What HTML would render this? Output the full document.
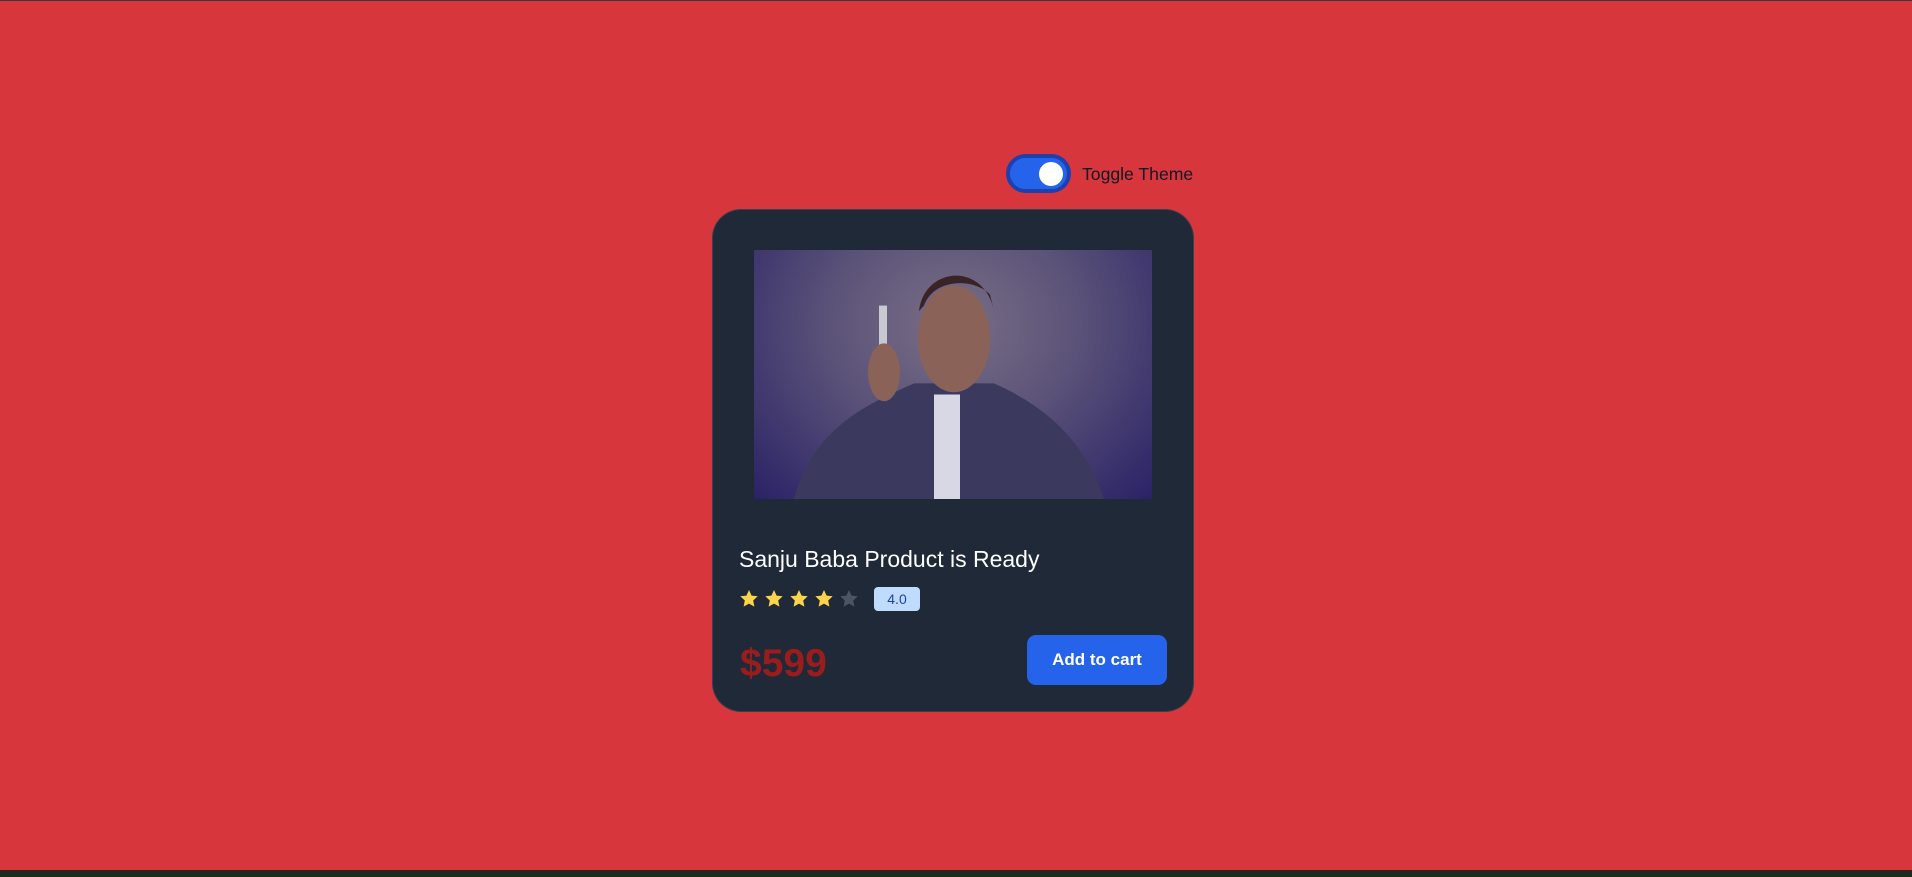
<!DOCTYPE html>
<html><head><style>
html,body{margin:0;padding:0;width:1912px;height:877px;overflow:hidden;background:#d7373c;font-family:"Liberation Sans",sans-serif;position:relative}
.top{position:absolute;left:0;top:0;width:1912px;height:1px;background:#3a3a3a}
.bot{position:absolute;left:0;top:870px;width:1912px;height:7px;background:#1e2a1e}
.tog{position:absolute;left:1006px;top:154px;width:65px;height:39px;border-radius:20px;background:#1e40af}
.tog i{position:absolute;left:4px;top:4px;right:4px;bottom:4px;border-radius:16px;background:#2563eb}
.tog b{position:absolute;left:33px;top:8px;width:24px;height:24px;border-radius:50%;background:#fff}
.tt{position:absolute;left:1082px;top:164px;font-size:17.6px;color:#111827}
.card{position:absolute;left:713px;top:210px;width:480px;height:501px;background:#1f2937;border-radius:28px;box-shadow:0 0 0 1px #3b3f4a}
.img{position:absolute;left:41px;top:40px;width:398px;height:249px;background:radial-gradient(ellipse at 50% 30%,#7a6f86 0%,#5a5278 45%,#2a2266 100%)}
.title{position:absolute;left:26px;top:336px;font-size:23px;color:#fff}
.stars{position:absolute;left:26px;top:379px}
.badge{position:absolute;left:161px;top:377px;width:46px;height:24px;border-radius:4px;background:#bfdbfe;color:#1e40af;font-size:14px;text-align:center;line-height:24px}
.price{position:absolute;left:27px;top:432px;font-size:39px;font-weight:bold;color:#9b1c1c}
.btn{position:absolute;left:314px;top:425px;width:140px;height:50px;border-radius:9px;background:#2563eb;color:#fff;font-size:17px;font-weight:bold;text-align:center;line-height:50px}
</style></head><body>
<div class="top"></div>
<div class="tog"><i></i><b></b></div>
<div class="tt">Toggle Theme</div>
<div class="card">
<div class="img">
<svg width="398" height="249" viewBox="0 0 398 224" preserveAspectRatio="none"><path d="M40 224 C60 160 110 140 160 120 L240 120 C290 140 330 170 350 224Z" fill="#3b3a5e"/><rect x="180" y="130" width="26" height="94" fill="#d8d8e4"/><ellipse cx="200" cy="80" rx="36" ry="48" fill="#8a6258"/><path d="M165 55 C170 15 230 10 240 55 L236 40 C220 25 180 25 170 50Z" fill="#3a2326"/><rect x="125" y="50" width="8" height="70" fill="#c8c8d0"/><ellipse cx="130" cy="110" rx="16" ry="26" fill="#8a6258"/></svg>
</div>
<div class="title">Sanju Baba Product is Ready</div>
<div class="stars"><svg width="125" height="20" viewBox="0 0 125 20">
<path d="M10 1l2.6 5.6 6.1.7-4.5 4.2 1.2 6.1L10 14.6 4.6 17.6l1.2-6.1L1.3 7.3l6.1-.7z" fill="#fcd34d"/>
<path transform="translate(25 0)" d="M10 1l2.6 5.6 6.1.7-4.5 4.2 1.2 6.1L10 14.6 4.6 17.6l1.2-6.1L1.3 7.3l6.1-.7z" fill="#fcd34d"/>
<path transform="translate(50 0)" d="M10 1l2.6 5.6 6.1.7-4.5 4.2 1.2 6.1L10 14.6 4.6 17.6l1.2-6.1L1.3 7.3l6.1-.7z" fill="#fcd34d"/>
<path transform="translate(75 0)" d="M10 1l2.6 5.6 6.1.7-4.5 4.2 1.2 6.1L10 14.6 4.6 17.6l1.2-6.1L1.3 7.3l6.1-.7z" fill="#fcd34d"/>
<path transform="translate(100 0)" d="M10 1l2.6 5.6 6.1.7-4.5 4.2 1.2 6.1L10 14.6 4.6 17.6l1.2-6.1L1.3 7.3l6.1-.7z" fill="#4b5563"/>
</svg></div>
<div class="badge">4.0</div>
<div class="price">$599</div>
<div class="btn">Add to cart</div>
</div>
<div class="bot"></div>
</body></html>
